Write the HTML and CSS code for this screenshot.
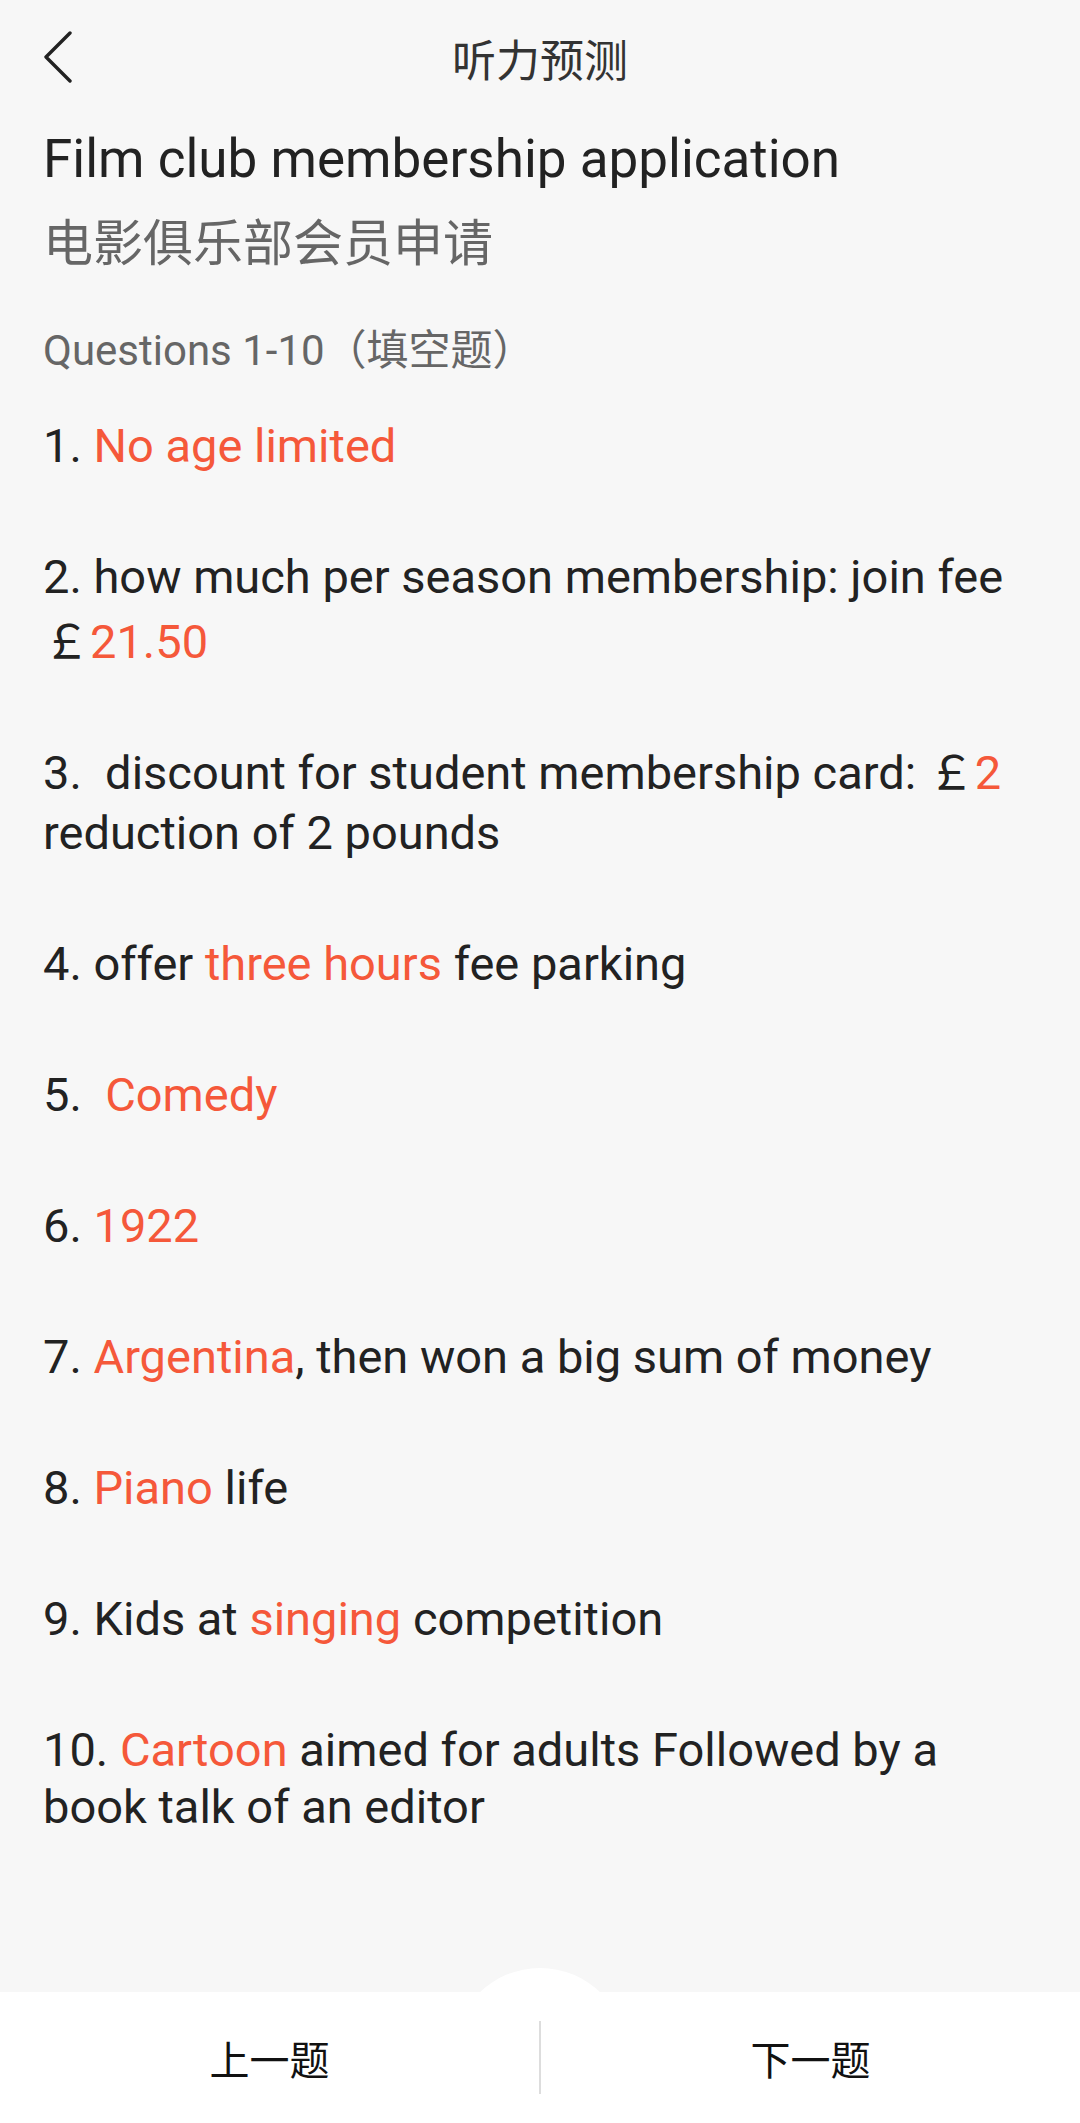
FILE: index.html
```html
<!DOCTYPE html>
<html>
<head>
<meta charset="utf-8">
<meta name="viewport" content="width=device-width, initial-scale=1">
<title>听力预测</title>
<link rel="stylesheet" href="styles.css">
</head>
<body>

<!-- ************************ top bar ******************************** -->
<div class="topbar">
  <a class="back" href="#">
    <svg width="30" height="52" viewBox="0 0 30 52">
      <polyline points="27,2 3,26 27,50" fill="none" stroke="#222" stroke-width="3.4" stroke-linecap="round" stroke-linejoin="round"/>
    </svg>
  </a>
  <div class="topbar_title">听力预测</div>
  <div></div>
</div>

<!-- ************************ content ******************************** -->
<div class="content">
  <h1 class="title_en">Film club membership application</h1>
  <h2 class="title_cn">电影俱乐部会员申请</h2>
  <p class="questions">Questions 1-10（填空题）</p>

  <p class="item">1. <span class="ans">No age limited</span></p>
  <p class="item">2. how much per season membership: join fee <span class="fee">￡<span class="ans">21.50</span></span></p>
  <p class="item">3. &nbsp;discount for student membership card: ￡<span class="ans">2</span> <span class="next_line">reduction of 2 pounds</span></p>
  <p class="item">4. offer <span class="ans">three hours</span> fee parking</p>
  <p class="item">5. &nbsp;<span class="ans">Comedy</span></p>
  <p class="item">6. <span class="ans">1922</span></p>
  <p class="item">7. <span class="ans">Argentina</span>, then won a big sum of money</p>
  <p class="item">8. <span class="ans">Piano</span> life</p>
  <p class="item">9. Kids at <span class="ans">singing</span> competition</p>
  <p class="item">10. <span class="ans">Cartoon</span> aimed for adults Followed by a book talk of an editor</p>
</div>

<!-- ************************ bottom bar ******************************** -->
<div class="bottombar">
  <a class="nav_btn" href="#">上一题</a>
  <span class="nav_sep"></span>
  <a class="nav_btn" href="#">下一题</a>
</div>

</body>
</html>
```

FILE: styles.css
```css
* {box-sizing: border-box}
body {
  margin: 0;
  min-height: 100vh;
  display: flex;
  flex-direction: column;
  background-color: #f7f7f7;
  color: #222;
  font-family: Roboto, "Noto Sans CJK SC", sans-serif;
}

/* top bar with back arrow and centered title */
.topbar {
  height: 124px;
  display: grid;
  grid-template-columns: 1fr auto 1fr;
  align-items: start;
  padding: 0 43px;
}

.back {
  display: block;
  width: 30px;
  height: 52px;
  margin-top: 31px;
}

.back svg {
  display: block;
}

.topbar_title {
  margin-top: 32px;
  font-family: "Noto Sans CJK SC", sans-serif;
  font-size: 44px;
  line-height: 52px;
  color: #333;
}

/* main content */
.content {
  flex: 1;
  padding: 0 43px 60px 43px;
}

.title_en {
  margin: 0;
  font-size: 53px;
  font-weight: normal;
  line-height: 70px;
  color: #222;
}

.title_cn {
  margin: 10px 0 0 0;
  font-family: "Noto Sans CJK SC", sans-serif;
  font-size: 50px;
  font-weight: normal;
  line-height: 70px;
  color: #666;
}

.questions {
  margin: 52px 0 0 0;
  font-size: 42px;
  line-height: 50px;
  color: #666;
}

.item {
  margin: 0 0 74px 0;
  font-size: 47px;
  line-height: 57px;
  color: #222;
}

.questions + .item {
  margin-top: 41px;
}

/* the fee drops to its own, slightly taller line */
.fee {
  display: inline-block;
  margin-top: 8px;
}

.next_line {
  display: inline-block;
  margin-top: 3px;
}

.ans {
  color: #f5583a;
}

/* bottom navigation */
.bottombar {
  position: relative;
  height: 131px;
  display: flex;
  align-items: center;
  background-color: #fff;
}

/* the round bump over the bar */
.bottombar::before {
  content: "";
  position: absolute;
  top: -24px;
  left: 50%;
  width: 174px;
  height: 174px;
  margin-left: -87px;
  border-radius: 50%;
  background-color: #fff;
}

.nav_btn {
  position: relative;
  flex: 1;
  text-align: center;
  font-family: "Noto Sans CJK SC", sans-serif;
  font-size: 40px;
  line-height: 56px;
  color: #111;
  text-decoration: none;
}

.nav_sep {
  position: relative;
  width: 2px;
  height: 73px;
  background-color: #ddd;
}
```
